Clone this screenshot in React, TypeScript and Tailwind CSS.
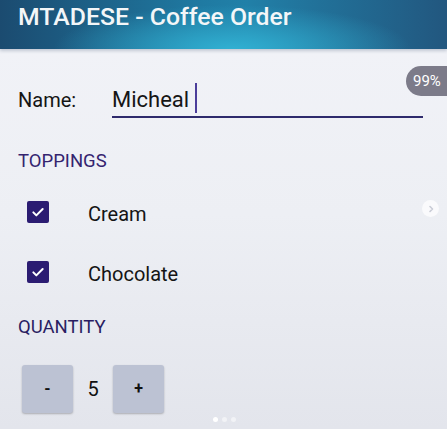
import React from "react";

function Check() {
  return (
    <div className="w-[22px] h-[22px] rounded-[2px] bg-[#2b1c72] flex items-center justify-center">
      <svg width="16" height="16" viewBox="0 0 24 24" fill="none">
        <path d="M5 12.5l4.5 4.5L19 7.5" stroke="#ffffff" strokeWidth="3" strokeLinecap="round" strokeLinejoin="round" />
      </svg>
    </div>
  );
}

export default function App() {
  return (
    <div
      className="relative w-[447px] h-[429px] overflow-hidden bg-gradient-to-b from-[#f2f3f8] via-[#edeff4] to-[#e3e5ec] text-black"
      style={{ fontFamily: "Roboto, 'Noto Sans', sans-serif" }}
    >
      <header className="h-[49px] pt-[3px] pl-[18px] bg-[radial-gradient(ellipse_40%_90%_at_52%_100%,#31b0d2_0%,rgba(49,176,210,0)_100%),linear-gradient(90deg,#1b4b70_0%,#1f7aa2_45%,#2180a8_55%,#22577f_100%)] shadow-[0_2px_3px_rgba(60,80,110,0.25)]">
        <h1 className="text-[24.8px] leading-[28px] font-medium text-[#f3f6f8]">
          MTADESE - Coffee Order
        </h1>
      </header>

      <div className="absolute right-0 top-[66px] h-[30px] w-[41px] rounded-l-full bg-[#7c7b89] flex items-center pl-[7px]">
        <span className="text-[15px] leading-[18px] text-white">99%</span>
      </div>

      <div className="mt-[34px] flex items-end pl-[18px] pr-[24px]">
        <span className="w-[94px] text-[20px] leading-[24px] mb-[6px] text-[#151515]">Name:</span>
        <div className="flex-1 flex items-end pb-[3px] border-b-2 border-[#2e2a6c]">
          <span className="text-[22px] leading-[26px] text-[#151515]">Micheal</span>
          <span className="w-[2px] h-[30px] ml-[6px] bg-[#4b3d9a]" />
        </div>
      </div>

      <div className="mt-[32px] pl-[18px] text-[18.5px] leading-[22px] text-[#34246f]">TOPPINGS</div>

      <div className="mt-[10px] h-[60px] flex items-center pl-[27px]">
        <Check />
        <span className="ml-[39px] mt-[4px] text-[20px] leading-[24px] text-[#151515]">Cream</span>
      </div>
      <div className="h-[60px] flex items-center pl-[27px]">
        <Check />
        <span className="ml-[39px] mt-[4px] text-[20px] leading-[24px] text-[#151515]">Chocolate</span>
      </div>

      <div className="mt-[14px] pl-[18px] text-[18.5px] leading-[22px] text-[#2a1d62]">QUANTITY</div>

      <div className="mt-[27px] pl-[22px] flex items-center">
        <button className="w-[51px] h-[48px] rounded-[3px] bg-[#bcc2d3] shadow-[0_1px_2px_rgba(0,0,0,0.25)] text-[16px] font-bold text-[#111]">
          -
        </button>
        <span className="w-[40px] text-center text-[20px] leading-[24px] text-[#111]">5</span>
        <button className="w-[51px] h-[48px] rounded-[3px] bg-[#bcc2d3] shadow-[0_1px_2px_rgba(0,0,0,0.25)] text-[16px] font-bold text-[#111]">
          +
        </button>
      </div>

      <div className="absolute right-[8px] top-[200px] w-[17px] h-[17px] rounded-full bg-white/70 flex items-center justify-center">
        <svg width="10" height="10" viewBox="0 0 10 10" fill="none">
          <path d="M4 2.5L6.5 5L4 7.5" stroke="#c9ccd6" strokeWidth="1.6" strokeLinecap="round" strokeLinejoin="round" />
        </svg>
      </div>

      <div className="absolute left-[213px] top-[417px] flex gap-[4px]">
        <span className="w-[5px] h-[5px] rounded-full bg-white" />
        <span className="w-[5px] h-[5px] rounded-full bg-white/50" />
        <span className="w-[5px] h-[5px] rounded-full bg-white/50" />
      </div>
    </div>
  );
}
